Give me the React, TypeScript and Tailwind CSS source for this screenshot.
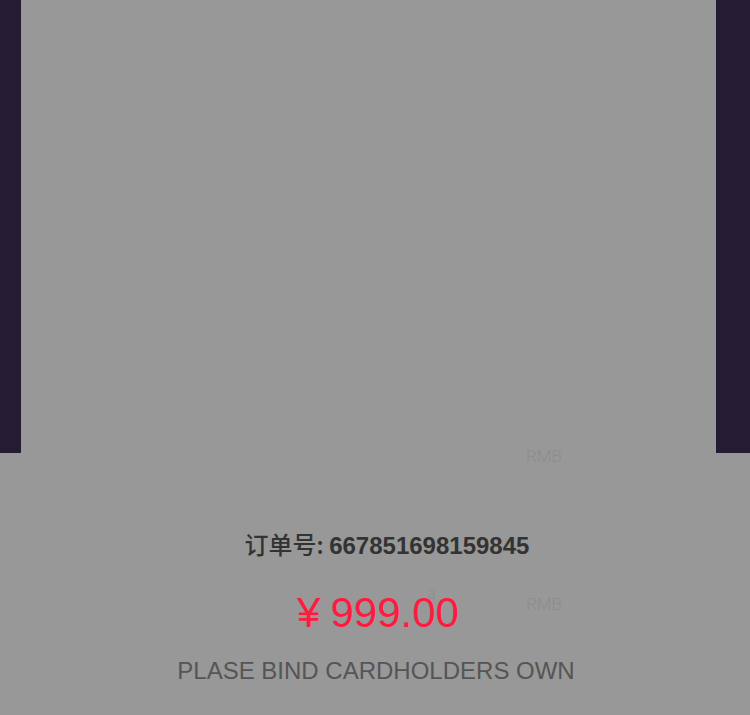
const SIDE = 'bg-[#241c33]';

export default function App() {
  return (
    <div className="relative h-[715px] w-[750px] overflow-hidden bg-[#989898] font-['Liberation_Sans','Noto_Sans_CJK_SC',sans-serif]">
      <div className="flex h-[453px]">
        <div className={`w-[21px] ${SIDE}`} />
        <div className="flex-1" />
        <div className={`w-[34px] ${SIDE}`} />
      </div>

      {/* faint labels showing through the mask */}
      <span className="absolute left-[526px] top-[444px] font-['Roboto',sans-serif] text-[17px] font-light text-[#8d8d8d]">RMB</span>
      <span className="absolute left-[526px] top-[592px] font-['Roboto',sans-serif] text-[17px] font-light text-[#8d8d8d]">RMB</span>
      <span className="absolute left-[428px] top-[584px] text-[14px] text-[#8f8f8f]">3</span>

      <div className="flex flex-col items-center pt-[76px]">
        <p className="pl-[24px] text-[24px] font-bold leading-[30px] text-[#333333]">
          <span className="font-['Noto_Sans_CJK_SC',sans-serif] font-medium">订单号: </span>
          667851698159845
        </p>
        <p className="mt-[24px] pl-[6px] text-[42px] leading-[56px] text-[#ff1a40]">
          <span className="mr-[10px]">¥</span>999.00
        </p>
        <p className="mt-[14px] pl-[2px] text-[24px] leading-[32px] text-[#555555]">PLASE BIND CARDHOLDERS OWN</p>
      </div>
    </div>
  );
}
